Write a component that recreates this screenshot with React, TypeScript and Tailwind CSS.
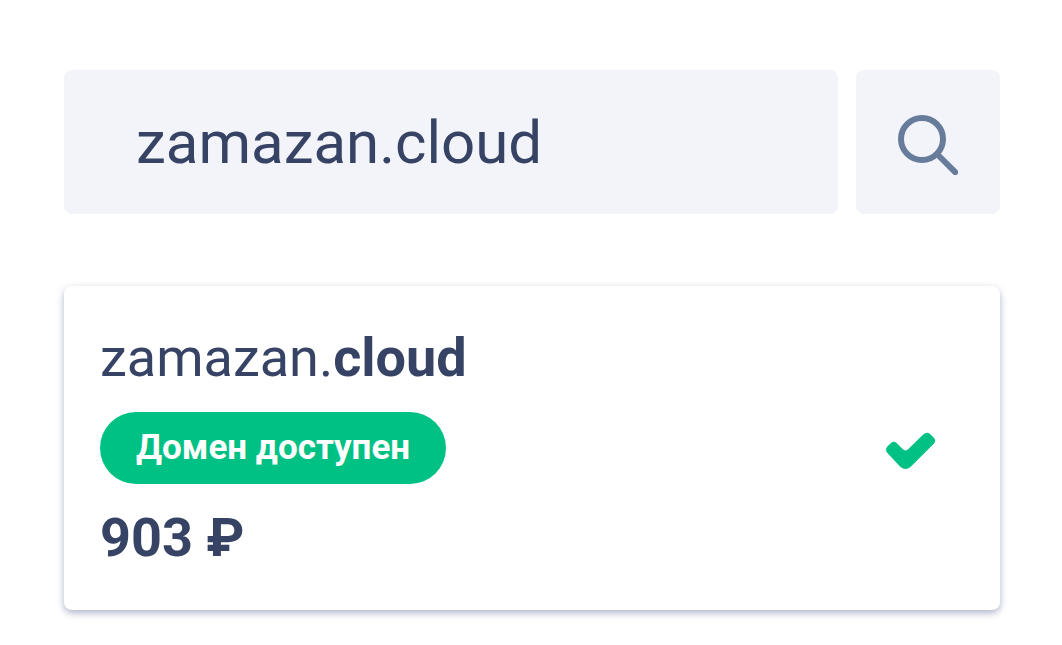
import React, { useState } from 'react';

function App() {

    const [domain, setDomain] = useState("zamazan.cloud");

    const [name, zone] = ["zamazan", "cloud"];

    const handleSubmit = (e: React.FormEvent) => {
        e.preventDefault();
    };

    return (
        <div className="min-h-screen bg-white pl-16 pr-[62px] pt-[70px] pb-8 font-['Roboto',sans-serif] text-[#364364]">

            {/* Search */}
            <form className="flex gap-[18px]" onSubmit={handleSubmit}>
                <input
                    type="text"
                    name="domain"
                    aria-label="Домен"
                    value={domain}
                    onChange={(e) => setDomain(e.target.value)}
                    className="h-36 min-w-0 flex-1 rounded-lg bg-[#f2f4fa] px-[72px] text-[60px] outline-none"
                />

                <button
                    type="submit"
                    aria-label="Найти"
                    className="flex size-36 shrink-0 items-center justify-center rounded-lg bg-[#f2f4fa] text-[#677b9a]"
                >
                    <svg viewBox="0 -6 60 66" className="h-[66px] w-15" fill="none" stroke="currentColor" strokeWidth="6">
                        <circle cx="24" cy="24" r="21" />
                        <path d="M39.5 39.5 57.2 57.2" strokeLinecap="round" strokeWidth="6" />
                    </svg>
                </button>
            </form>

            {/* Result */}
            <div className="mt-[72px] flex items-center justify-between rounded-lg bg-white p-9 shadow-[0_3px_7px_rgba(54,67,120,0.4)]">
                <div className="flex flex-col items-start gap-[18px]">
                    <h2 className="text-[54px] leading-[72px] font-normal">
                        {name}.<b className="font-bold">{zone}</b>
                    </h2>
                    <span className="rounded-full bg-[#00c184] px-9 text-[35px] leading-[72px] font-bold text-white">
                        Домен доступен
                    </span>
                    <p className="text-[54px] leading-[72px] font-bold">903 ₽</p>
                </div>

                <svg viewBox="0 -6 50 44" className="mr-7 h-11 w-[50px] text-[#00c184]" fill="currentColor" aria-hidden="true">
                    <path d="M1.6 14.2 5 10.9Q7.8 8.6 10.6 11L17.2 17.6Q19.5 19.6 21.8 17.6L37.5 2.3Q41 -.8 44.3 2.2L47.8 5.7Q50.6 8.7 47.8 11.8L24.5 34.9Q19.5 39 14.5 34.9L1.6 21.2Q-1.6 17.6 1.6 14.2Z" />
                </svg>
            </div>

        </div>
    );
}

export default App;
